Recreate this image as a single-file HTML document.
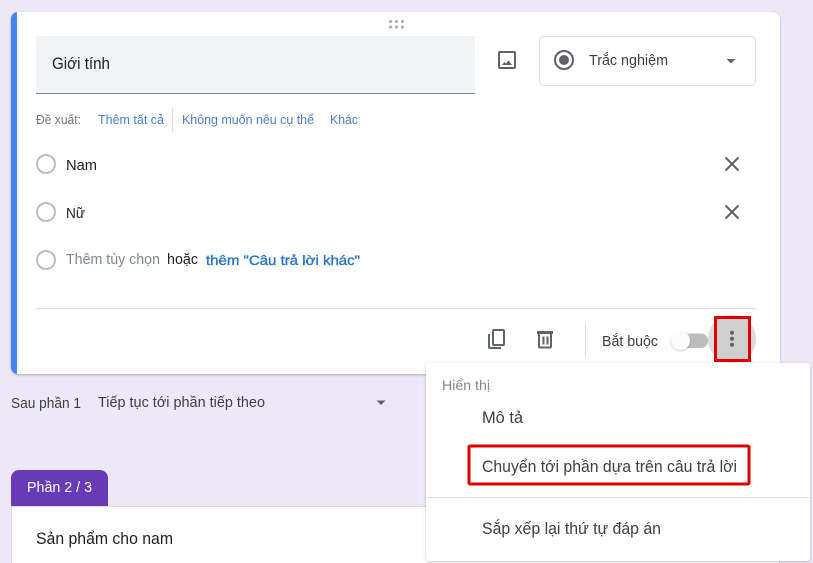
<!DOCTYPE html>
<html><head><meta charset="utf-8"><style>
html,body{margin:0;padding:0;width:813px;height:563px;overflow:hidden;background:#ede8f7}
svg{display:block;position:absolute;left:0;top:0}
text{font-family:"Liberation Sans","DejaVu Sans",sans-serif;white-space:pre}
</style></head><body>
<svg width="813" height="563" viewBox="0 0 813 563" xmlns="http://www.w3.org/2000/svg">
<defs>
<filter id="s1" x="-5%" y="-5%" width="110%" height="110%"><feDropShadow dx="0" dy="1" stdDeviation="1" flood-color="#000" flood-opacity=".28"/></filter>
<filter id="s2" x="-5%" y="-5%" width="110%" height="110%"><feDropShadow dx="0" dy="1" stdDeviation="1.500" flood-color="#000" flood-opacity=".22"/></filter>
<filter id="s3" x="-40%" y="-40%" width="180%" height="180%"><feDropShadow dx="0" dy="1" stdDeviation="1" flood-color="#000" flood-opacity=".22"/></filter>
</defs>
<!-- card 1 -->
<rect x="11" y="12" width="769" height="362" rx="7" fill="#4285f4" filter="url(#s1)"/>
<path d="M17 12H773a7 7 0 0 1 7 7V367a7 7 0 0 1-7 7H17Z" fill="#fff"/>
<g fill="#adadad"><rect x="389" y="20" width="3" height="3" rx="1"/><rect x="395" y="20" width="3" height="3" rx="1"/><rect x="401" y="20" width="3" height="3" rx="1"/><rect x="389" y="25.500" width="3" height="3" rx="1"/><rect x="395" y="25.500" width="3" height="3" rx="1"/><rect x="401" y="25.500" width="3" height="3" rx="1"/></g>
<rect x="36" y="36" width="439" height="57" fill="#f1f3f4"/>
<rect x="36" y="93" width="439" height="1" fill="#80868b"/>
<text x="52" y="69" font-size="16.500" fill="#202124" textLength="58" lengthAdjust="spacingAndGlyphs">Giới tính</text>
<!-- image icon -->
<rect x="499" y="52" width="16" height="16" rx="1" fill="none" stroke="#5f6368" stroke-width="2"/>
<path fill="#5f6368" d="M502 65l2.500-3 1.500 1.500 2.500-3 3.500 4.500Z"/>
<!-- type dropdown -->
<rect x="539.500" y="36.500" width="216" height="49" rx="4" fill="#fff" stroke="#dadce0"/>
<circle cx="564" cy="60" r="9" fill="none" stroke="#5f6368" stroke-width="2"/>
<circle cx="564" cy="60" r="5" fill="#5f6368"/>
<text x="589" y="65" font-size="14.500" fill="#3c4043" textLength="79" lengthAdjust="spacingAndGlyphs">Trắc nghiệm</text>
<path d="M726.500 59h9l-4.500 4.500Z" fill="#5f6368"/>
<!-- suggestions -->
<text x="36" y="124" font-size="13" fill="#70757a" textLength="45" lengthAdjust="spacingAndGlyphs">Đề xuất:</text>
<text x="98" y="124" font-size="13" fill="#3f7fdc" textLength="66" lengthAdjust="spacingAndGlyphs">Thêm tất cả</text>
<rect x="172" y="108" width="1" height="24" fill="#dadce0"/>
<text x="182" y="124" font-size="13" fill="#4a7bd6" textLength="132" lengthAdjust="spacingAndGlyphs">Không muốn nêu cụ thể</text>
<text x="330" y="124" font-size="13" fill="#4a7bd6" textLength="28" lengthAdjust="spacingAndGlyphs">Khác</text>
<!-- options -->
<g fill="none" stroke="#bdbdbd" stroke-width="2"><circle cx="46" cy="164" r="9"/><circle cx="46" cy="212" r="9"/><circle cx="46" cy="260" r="9"/></g>
<text x="66" y="170" font-size="15" fill="#202124" textLength="31" lengthAdjust="spacingAndGlyphs">Nam</text>
<text x="66" y="218" font-size="15" fill="#202124" textLength="19" lengthAdjust="spacingAndGlyphs">Nữ</text>
<text x="66" y="264" font-size="14.500" fill="#80868b" textLength="94" lengthAdjust="spacingAndGlyphs">Thêm tùy chọn</text>
<text x="167" y="264" font-size="14.500" fill="#202124" textLength="31" lengthAdjust="spacingAndGlyphs">hoặc</text>
<text x="206" y="265" font-size="14" fill="#2373c8" stroke="#2373c8" stroke-width=".35" textLength="154" lengthAdjust="spacingAndGlyphs">thêm "Câu trả lời khác"</text>
<g stroke="#5f6368" stroke-width="2" fill="none"><path d="M725.500 157.500l13 13M738.500 157.500l-13 13"/><path d="M725.500 205.500l13 13M738.500 205.500l-13 13"/></g>
<!-- footer -->
<rect x="36" y="308" width="720" height="1" fill="#dadce0"/>
<path d="M489 334v13a1 1 0 0 0 1 1h11" fill="none" stroke="#5f6368" stroke-width="2"/>
<rect x="493" y="330" width="11" height="15" rx="1" fill="none" stroke="#5f6368" stroke-width="2"/>
<path d="M537 332.500h16" stroke="#5f6368" stroke-width="3" fill="none"/>
<path d="M539 333v13.500a1 1 0 0 0 1 1h10a1 1 0 0 0 1-1V333M543.500 336.500v8M547.500 336.500v8" fill="none" stroke="#5f6368" stroke-width="2"/>
<rect x="585" y="324" width="1" height="34" fill="#dadce0"/>
<text x="602" y="346" font-size="14.500" fill="#3c4043" textLength="56" lengthAdjust="spacingAndGlyphs">Bắt buộc</text>
<rect x="674" y="333.500" width="34" height="14.500" rx="7" fill="#bdbdbd"/>
<circle cx="680.500" cy="340.500" r="9.500" fill="#fbfbfb" filter="url(#s3)"/>
<circle cx="732" cy="339" r="24" fill="#dadada"/>
<rect x="715.500" y="317.500" width="34" height="43" fill="#cfcfcf" stroke="#e00000" stroke-width="3"/>
<g fill="#5f6368"><circle cx="732" cy="332.700" r="2"/><circle cx="732" cy="338.700" r="2"/><circle cx="732" cy="344.700" r="2"/></g>
<!-- after section -->
<text x="11" y="408" font-size="14.500" fill="#3c4043" textLength="70" lengthAdjust="spacingAndGlyphs">Sau phần 1</text>
<text x="98" y="407" font-size="14.500" fill="#3c4043" textLength="167" lengthAdjust="spacingAndGlyphs">Tiếp tục tới phần tiếp theo</text>
<path d="M376.500 400.500h9l-4.500 4.500Z" fill="#5f6368"/>
<!-- section 2 -->
<rect x="11.500" y="506.500" width="768" height="70" fill="#fff" stroke="#dadce0" stroke-width="1"/>
<path d="M11 506v-28a8 8 0 0 1 8-8h81a8 8 0 0 1 8 8v28Z" fill="#673ab7"/>
<text x="27" y="492" font-size="14.500" fill="#fff" textLength="65" lengthAdjust="spacingAndGlyphs">Phần 2 / 3</text>
<text x="36" y="544" font-size="16.500" fill="#202124" textLength="137" lengthAdjust="spacingAndGlyphs">Sản phẩm cho nam</text>
<!-- menu -->
<rect x="426" y="363" width="384" height="198" rx="4" fill="#fff" filter="url(#s2)"/>
<text x="442" y="390" font-size="13.500" fill="#80868b" textLength="48" lengthAdjust="spacingAndGlyphs">Hiển thị</text>
<text x="482" y="423" font-size="16.500" fill="#3c4043" textLength="41" lengthAdjust="spacingAndGlyphs">Mô tả</text>
<text x="482" y="472" font-size="16.500" fill="#3c4043" textLength="255" lengthAdjust="spacingAndGlyphs">Chuyển tới phần dựa trên câu trả lời</text>
<rect x="469" y="446" width="280" height="38" rx="1" fill="none" stroke="#e00000" stroke-width="3"/>
<rect x="426" y="497" width="384" height="1" fill="#dadce0"/>
<text x="482" y="534" font-size="16.500" fill="#3c4043" textLength="179" lengthAdjust="spacingAndGlyphs">Sắp xếp lại thứ tự đáp án</text>
</svg>
</body></html>
